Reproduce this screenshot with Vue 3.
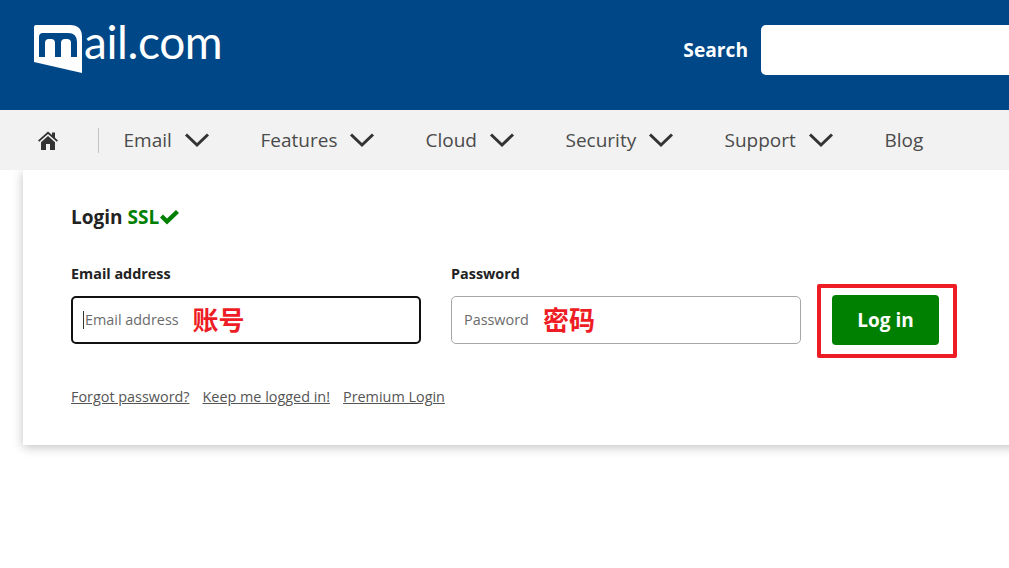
<script setup>
const navItems = [
  { label: 'Email', w: 137 },
  { label: 'Features', w: 165 },
  { label: 'Cloud', w: 140 },
  { label: 'Security', w: 159 },
  { label: 'Support', w: 160 },
]
</script>

<template>
  <div class="page">
    <header class="top">
      <div class="logo">
        <svg class="flag" width="50" height="49" viewBox="0 0 50 49" role="img" aria-label="mail.com">
          <path d="M3 0H37Q49 0 49 12V48L1 37V2Q1 0 3 0Z" fill="#fff" />
          <path d="M6 32V12Q6 8 10 8H35Q44 8 44 17V32Z" fill="#004788" />
          <path d="M12 32V18Q12 14 16 14H18Q22 14 22 18V32ZM28 32V18Q28 14 32 14H34Q38 14 38 18V32Z" fill="#fff" />
        </svg>
        <span class="logo-text">ail.com</span>
      </div>
      <div class="search">
        <span class="search-label">Search</span>
        <div class="search-box"></div>
      </div>
    </header>

    <nav class="nav">
      <svg class="home" width="22" height="20" viewBox="0 0 22 20">
        <path d="M1 10.500 11 1.500l4 3.600V2.500h3v5.200l3 2.800-1.200 1.300L11 3.900 2.200 11.800Z" fill="#333" />
        <path d="M4 12.300 11 6l7 6.300V20h-5v-6H9v6H4Z" fill="#333" />
      </svg>
      <span class="sep"></span>
      <a v-for="item in navItems" :key="item.label" class="nav-item" :style="{ width: item.w + 'px' }">
        {{ item.label }}
        <svg class="chev" width="26" height="16" viewBox="0 0 26 16">
          <path d="M2 2.500 13 13 24 2.500" fill="none" stroke="#333" stroke-width="3" />
        </svg>
      </a>
      <a class="nav-item">Blog</a>
    </nav>

    <main class="card">
      <h1 class="title">
        Login <span class="ssl">SSL</span><svg class="tick" width="21" height="16" viewBox="0 0 21 16">
          <path d="M1 8.500 4 5.500 8 9.500 17 1l3 3L8 15.500Z" fill="#008000" />
        </svg>
      </h1>

      <div class="row">
        <div class="field">
          <label class="label">Email address</label>
          <div class="input focus">
            <span class="caret"></span>
            <span class="ph">Email address</span>
            <span class="note">账号</span>
          </div>
        </div>
        <div class="field">
          <label class="label">Password</label>
          <div class="input">
            <span class="ph">Password</span>
            <span class="note">密码</span>
          </div>
        </div>
        <div class="btn-wrap">
          <button class="btn">Log in</button>
        </div>
      </div>

      <div class="links">
        <a>Forgot password?</a>
        <a>Keep me logged in!</a>
        <a>Premium Login</a>
      </div>
    </main>
  </div>
</template>

<style>
html, body { margin: 0; background: #fff; overflow: hidden; }
</style>

<style scoped>
.page {
  width: 1009px;
  height: 568px;
  overflow: hidden;
  font-family: "Open Sans", "Noto Sans", sans-serif;
  background: #fff;
}
.top {
  height: 110px;
  background: #004788;
  display: flex;
  justify-content: space-between;
  align-items: flex-start;
  box-sizing: border-box;
}
.logo {
  display: flex;
  align-items: flex-start;
  margin: 25px 0 0 33px;
}
.flag { display: block; flex: none; }
.logo-text {
  font: 400 46px/1 "Lato", sans-serif;
  color: #fff;
  margin: -6px 0 0 1px;
  letter-spacing: -0.4px;
}
.search {
  display: flex;
  align-items: center;
  margin-top: 25px;
  gap: 13px;
}
.search-label {
  color: #fff;
  font-size: 19.2px;
  font-weight: 700;
  margin-top: -1px;
}
.search-box {
  width: 248px;
  height: 50px;
  background: #fff;
  border-radius: 5px 0 0 5px;
}
.nav {
  height: 60px;
  background: #f2f2f2;
  display: flex;
  align-items: center;
  padding-left: 37px;
  box-sizing: border-box;
}
.home { margin-right: 39px; margin-top: -1px; }
.sep {
  width: 1px;
  height: 25px;
  background: #c4c4c4;
  margin-right: 24.5px;
}
.nav-item {
  display: flex;
  align-items: center;
  flex: none;
  gap: 12px;
  color: #4a4a4a;
  font-size: 19px;
  white-space: nowrap;
}
.chev { display: block; }
.card {
  width: 1020px;
  height: 275px;
  margin-left: 23px;
  box-sizing: border-box;
  padding: 35px 0 0 48px;
  background: #fff;
  box-shadow: 0 2px 10px rgba(0, 0, 0, 0.25);
  clip-path: inset(0 -20px -20px -20px);
}
.title {
  margin: 0;
  font-size: 19px;
  line-height: 25px;
  font-weight: 700;
  color: #222;
  display: flex;
  align-items: center;
}
.ssl { color: #008000; margin-left: 5px; }
.tick { margin-left: 0; margin-top: -2px; }
.row {
  display: flex;
  margin-top: 34px;
  gap: 30px;
}
.field { width: 350px; flex: none; }
.label {
  display: block;
  font-size: 14.4px;
  line-height: 19px;
  font-weight: 700;
  color: #222;
  margin-bottom: 13px;
}
.input {
  height: 48px;
  box-sizing: border-box;
  border: 1px solid #a6a6a6;
  border-radius: 5px;
  display: flex;
  align-items: center;
  padding-left: 12px;
}
.input.focus {
  position: relative;
  border: 2px solid #111;
  padding-left: 12px;
}
.caret {
  position: absolute;
  left: 10px;
  top: 13px;
  width: 1px;
  height: 18px;
  background: #333;
}
.ph {
  font-size: 14.4px;
  color: #6b6b6b;
  margin-top: -2px;
}
.note {
  margin-left: 14px;
  margin-top: -3px;
  font: 700 26px/1 "Noto Sans CJK SC", sans-serif;
  color: #ee1c25;
}
.btn-wrap {
  flex: none;
  box-sizing: border-box;
  width: 140px;
  height: 74px;
  margin: 20px 0 0 -14px;
  padding: 7px 0 0 11px;
  border: 4px solid #ee1c25;
  border-radius: 2px;
}
.btn {
  display: block;
  width: 107px;
  height: 50px;
  border: 0;
  border-radius: 4px;
  background: #008000;
  color: #fff;
  font: 700 19px "Open Sans", sans-serif;
  padding: 0;
}
.links {
  display: flex;
  gap: 13px;
  margin-top: 29px;
  font-size: 14.4px;
  line-height: 19px;
  color: #555;
}
.links a { text-decoration: underline; }
</style>
